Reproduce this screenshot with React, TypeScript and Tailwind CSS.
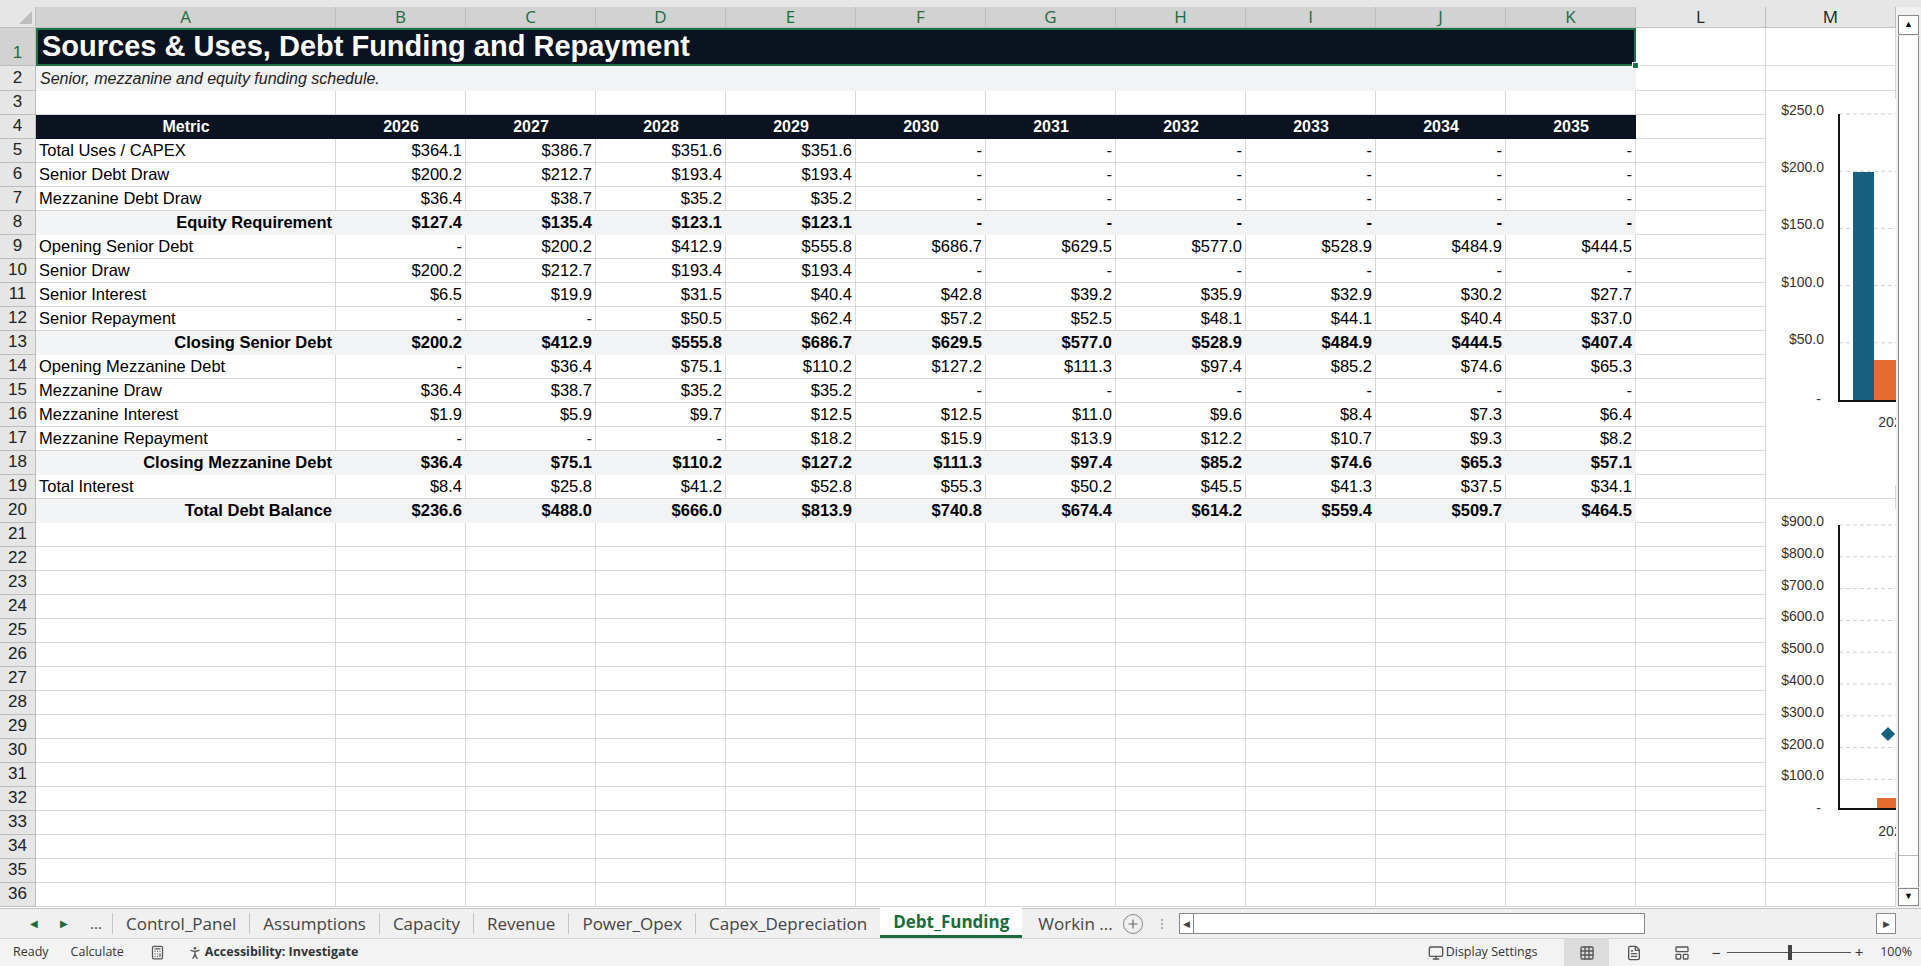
import { Plus, MoreVertical, Grid3x3, FileText, LayoutPanelTop, Calculator, Monitor, PersonStanding } from "lucide-react";

type Row = { n: number; label: string; vals: (number | null)[]; bold?: boolean };

const cols = ["B", "C", "D", "E", "F", "G", "H", "I", "J", "K"];
const years = [2026, 2027, 2028, 2029, 2030, 2031, 2032, 2033, 2034, 2035];
const _ = null;

const rows: Row[] = [
  { n: 5, label: "Total Uses / CAPEX", vals: [364.1, 386.7, 351.6, 351.6, _, _, _, _, _, _] },
  { n: 6, label: "Senior Debt Draw", vals: [200.2, 212.7, 193.4, 193.4, _, _, _, _, _, _] },
  { n: 7, label: "Mezzanine Debt Draw", vals: [36.4, 38.7, 35.2, 35.2, _, _, _, _, _, _] },
  { n: 8, label: "Equity Requirement", bold: true, vals: [127.4, 135.4, 123.1, 123.1, _, _, _, _, _, _] },
  { n: 9, label: "Opening Senior Debt", vals: [_, 200.2, 412.9, 555.8, 686.7, 629.5, 577.0, 528.9, 484.9, 444.5] },
  { n: 10, label: "Senior Draw", vals: [200.2, 212.7, 193.4, 193.4, _, _, _, _, _, _] },
  { n: 11, label: "Senior Interest", vals: [6.5, 19.9, 31.5, 40.4, 42.8, 39.2, 35.9, 32.9, 30.2, 27.7] },
  { n: 12, label: "Senior Repayment", vals: [_, _, 50.5, 62.4, 57.2, 52.5, 48.1, 44.1, 40.4, 37.0] },
  { n: 13, label: "Closing Senior Debt", bold: true, vals: [200.2, 412.9, 555.8, 686.7, 629.5, 577.0, 528.9, 484.9, 444.5, 407.4] },
  { n: 14, label: "Opening Mezzanine Debt", vals: [_, 36.4, 75.1, 110.2, 127.2, 111.3, 97.4, 85.2, 74.6, 65.3] },
  { n: 15, label: "Mezzanine Draw", vals: [36.4, 38.7, 35.2, 35.2, _, _, _, _, _, _] },
  { n: 16, label: "Mezzanine Interest", vals: [1.9, 5.9, 9.7, 12.5, 12.5, 11.0, 9.6, 8.4, 7.3, 6.4] },
  { n: 17, label: "Mezzanine Repayment", vals: [_, _, _, 18.2, 15.9, 13.9, 12.2, 10.7, 9.3, 8.2] },
  { n: 18, label: "Closing Mezzanine Debt", bold: true, vals: [36.4, 75.1, 110.2, 127.2, 111.3, 97.4, 85.2, 74.6, 65.3, 57.1] },
  { n: 19, label: "Total Interest", vals: [8.4, 25.8, 41.2, 52.8, 55.3, 50.2, 45.5, 41.3, 37.5, 34.1] },
  { n: 20, label: "Total Debt Balance", bold: true, vals: [236.6, 488.0, 666.0, 813.9, 740.8, 674.4, 614.2, 559.4, 509.7, 464.5] },
];

const fmt = (v: number | null) => (v === null ? "-" : "$" + v.toFixed(1));

const RowNum = ({ n, h = "h-[24px]", active }: { n: number; h?: string; active?: boolean }) => (
  <div
    className={`w-[36px] shrink-0 ${h} flex items-end justify-center pb-[0px] border-r border-b border-[#bdbdbd] text-[17px] ${
      active ? "bg-[#d2d2d2] text-[#1e6b3c]" : "bg-[#e6e6e6] text-[#222]"
    }`}
  >
    {n}
  </div>
);

const Empty = ({ cls = "" }: { cls?: string }) => (
  <div className={`w-[130px] shrink-0 border-r border-b border-[#d9d9d9] ${cls}`} />
);

function Chart() {
  const lbl = "fill-[#333] text-[14px]";
  const c2 = [900, 800, 700, 600, 500, 400, 300, 200, 100];
  return (
    <svg className="absolute left-[1766px] top-0" width={130} height={908} style={{ fontFamily: "Liberation Sans, Arial, sans-serif" }}>
      <rect x={0} y={92} width={130} height={386} fill="#fff" />
      {[250, 200, 150, 100, 50].map((v, i) => {
        const y = 107 + i * 57.2;
        return (
          <g key={v}>
            <line x1={73} x2={130} y1={y} y2={y} stroke="#cfcfcf" strokeDasharray="4 3" />
            <text x={58} y={y + 1} textAnchor="end" className={lbl}>${v}.0</text>
          </g>
        );
      })}
      <text x={55} y={397} textAnchor="end" className={lbl}>-</text>
      <rect x={87} y={165} width={21} height={228} fill="#17607f" />
      <rect x={108} y={353} width={22} height={40} fill="#e46c2f" />
      <line x1={73} x2={73} y1={107} y2={394} stroke="#111" strokeWidth={2} />
      <line x1={72} x2={130} y1={394} y2={394} stroke="#111" strokeWidth={2} />
      <text x={124} y={420} textAnchor="middle" className={lbl}>202</text>

      <rect x={0} y={502} width={130} height={343} fill="#fff" />
      {c2.map((v, i) => {
        const y = 518 + i * 31.8;
        return (
          <g key={v}>
            <line x1={73} x2={130} y1={y} y2={y} stroke="#cfcfcf" strokeDasharray="4 3" />
            <text x={58} y={y + 1} textAnchor="end" className={lbl}>${v}.0</text>
          </g>
        );
      })}
      <text x={55} y={806} textAnchor="end" className={lbl}>-</text>
      <rect x={111} y={791} width={19} height={11} fill="#e46c2f" />
      <rect x={117} y={722} width={10} height={10} fill="#17607f" transform="rotate(45 122 727)" />
      <line x1={73} x2={73} y1={518} y2={803} stroke="#111" strokeWidth={2} />
      <line x1={72} x2={130} y1={802} y2={802} stroke="#111" strokeWidth={2} />
      <text x={124} y={829} textAnchor="middle" className={lbl}>202</text>
    </svg>
  );
}

export default function App() {
  const font = { fontFamily: "Liberation Sans, Arial, sans-serif" };
  const ui = { fontFamily: "'Open Sans', 'Noto Sans', sans-serif" };
  const empties = Array.from({ length: 16 }, (_, i) => 21 + i);

  return (
    <div className="w-[1921px] h-[966px] overflow-hidden bg-white flex flex-col text-black" style={font}>
      <div className="h-[7px] bg-[#e6e6e6]" />
      <div className="flex flex-1 min-h-0">
        <div className="relative flex-1 flex flex-col overflow-hidden">
          {/* column headers */}
          <div className="flex h-[21px] text-[17px]" style={ui}>
            <div className="w-[36px] shrink-0 bg-[#e6e6e6] border-r border-b border-[#bdbdbd] relative">
              <div className="absolute right-[3px] bottom-[3px] w-0 h-0 border-l-[13px] border-l-transparent border-b-[13px] border-b-[#bdbdbd]" />
            </div>
            <div className="w-[300px] shrink-0 bg-[#d2d2d2] text-[#1e6b3c] border-r border-b border-[#bdbdbd] flex items-center justify-center">A</div>
            {cols.map((c) => (
              <div key={c} className="w-[130px] shrink-0 bg-[#d2d2d2] text-[#1e6b3c] border-r border-b border-[#bdbdbd] flex items-center justify-center">{c}</div>
            ))}
            {["L", "M"].map((c) => (
              <div key={c} className="w-[130px] shrink-0 bg-[#e6e6e6] text-[#222] border-r border-b border-[#bdbdbd] flex items-center justify-center">{c}</div>
            ))}
          </div>
          {/* row 1 */}
          <div className="flex h-[38px]">
            <RowNum n={1} h="h-[38px]" active />
            <div className="w-[1600px] shrink-0 bg-[#0b1220] border-2 border-[#1e7145] relative flex items-center px-[4px] text-white font-bold text-[29px]">
              Sources &amp; Uses, Debt Funding and Repayment
              <div className="absolute -right-[5px] -bottom-[5px] w-[7px] h-[7px] bg-[#1e7145] border border-white" />
            </div>
            <Empty /><Empty />
          </div>
          {/* row 2 */}
          <div className="flex h-[25px]">
            <RowNum n={2} h="h-[25px]" />
            <div className="w-[1600px] shrink-0 bg-[#f2f3f5] flex items-center px-[4px] italic text-[16px] text-[#222]">
              Senior, mezzanine and equity funding schedule.
            </div>
            <Empty /><Empty />
          </div>
          {/* row 3 */}
          <div className="flex h-[24px]">
            <RowNum n={3} />
            <div className="w-[300px] shrink-0 border-r border-b border-[#d9d9d9]" />
            {cols.map((c) => <Empty key={c} />)}
            <Empty /><Empty />
          </div>
          {/* row 4 header */}
          <div className="flex h-[24px]">
            <RowNum n={4} />
            <div className="w-[300px] shrink-0 bg-[#0b1220] text-white font-bold text-[16px] flex items-center justify-center">Metric</div>
            {years.map((y) => (
              <div key={y} className="w-[130px] shrink-0 bg-[#0b1220] text-white font-bold text-[16px] flex items-center justify-center">{y}</div>
            ))}
            <Empty /><Empty />
          </div>
          {rows.map((r) => (
            <div key={r.n} className="flex h-[24px] text-[16.5px]">
              <RowNum n={r.n} />
              <div
                className={`w-[300px] shrink-0 flex items-center px-[3px] border-r border-b ${
                  r.bold ? "bg-[#f2f3f5] font-bold justify-end border-[#f2f3f5]" : "border-[#d9d9d9]"
                }`}
              >
                {r.label}
              </div>
              {r.vals.map((v, i) => (
                <div
                  key={i}
                  className={`w-[130px] shrink-0 flex items-center justify-end px-[3px] border-r border-b ${
                    r.bold ? "bg-[#f2f3f5] font-bold border-[#f2f3f5]" : "border-[#d9d9d9]"
                  }`}
                >
                  {fmt(v)}
                </div>
              ))}
              <Empty /><Empty />
            </div>
          ))}
          {empties.map((n) => (
            <div key={n} className="flex h-[24px]">
              <RowNum n={n} />
              <div className="w-[300px] shrink-0 border-r border-b border-[#d9d9d9]" />
              {cols.map((c) => <Empty key={c} />)}
              <Empty /><Empty />
            </div>
          ))}
          <Chart />
        </div>
        {/* vertical scrollbar */}
        <div className="w-[25px] shrink-0 bg-[#f0f0f0] flex flex-col items-center pt-[8px] pb-[2px]">
          <div className="w-[21px] h-[20px] border border-[#888] bg-white flex items-center justify-center text-[9px]">▲</div>
          <div className="w-[21px] flex-1 bg-white border-x border-[#888] my-[1px]">
            <div className="h-[820px] border-b border-[#bbb]" />
          </div>
          <div className="w-[21px] h-[18px] border border-[#888] bg-white flex items-center justify-center text-[9px]">▼</div>
        </div>
      </div>
      {/* tab bar */}
      <div className="h-[30px] shrink-0 bg-[#f0f0f0] border-t border-[#c6c6c6] flex items-stretch text-[17px] text-[#444]" style={ui}>
        <div className="flex items-center gap-[22px] pl-[30px] w-[112px] text-[#1e6b3c] text-[10px]">
          <span>◀</span>
          <span>▶</span>
          <span className="text-[#444] text-[15px]">...</span>
        </div>
        {["Control_Panel", "Assumptions", "Capacity", "Revenue", "Power_Opex", "Capex_Depreciation"].map((t) => (
          <div key={t} className="flex items-center px-[13px] border-l border-[#c6c6c6] my-[4px]">{t}</div>
        ))}
        <div className="flex items-center px-[13px] bg-white text-[#1e6b3c] font-bold border-b-[3px] border-[#1e6b3c] -mt-[1px]">Debt_Funding</div>
        <div className="flex items-center pl-[16px] pr-[10px]">Workin ...</div>
        <div className="flex items-center gap-[12px]">
          <div className="w-[20px] h-[20px] rounded-full border border-[#888] flex items-center justify-center">
            <Plus size={14} className="text-[#666]" />
          </div>
          <MoreVertical size={14} className="text-[#aaa]" />
        </div>
        <div className="ml-[10px] my-[4px] w-[466px] border border-[#888] bg-white flex items-center">
          <span className="text-[9px] px-[3px]">◀</span>
          <div className="h-full border-l border-[#888]" />
        </div>
        <div className="ml-auto mr-[25px] my-[4px] w-[20px] border border-[#888] bg-white flex items-center justify-center text-[9px]">▶</div>
      </div>
      {/* status bar */}
      <div className="h-[28px] shrink-0 bg-[#f3f3f3] border-t border-[#d6d6d6] flex items-center text-[12.5px] text-[#333]" style={ui}>
        <span className="ml-[13px]">Ready</span>
        <span className="ml-[22px]">Calculate</span>
        <Calculator size={15} className="ml-[26px] text-[#555]" />
        <PersonStanding size={16} className="ml-[22px] text-[#555]" />
        <span className="ml-[2px] font-bold">Accessibility: Investigate</span>
        <div className="ml-auto flex items-center h-full">
          <Monitor size={16} className="text-[#555]" />
          <span className="ml-[2px]">Display Settings</span>
          <div className="ml-[27px] w-[45px] h-full bg-[#dcdcdc] flex items-center justify-center">
            <Grid3x3 size={16} className="text-[#555]" />
          </div>
          <FileText size={16} className="ml-[17px] text-[#555]" />
          <LayoutPanelTop size={16} className="ml-[32px] text-[#555]" />
          <span className="ml-[21px] text-[16px]">−</span>
          <div className="ml-[6px] w-[124px] h-[1px] bg-[#555] relative">
            <div className="absolute left-[61px] -top-[7px] w-[4px] h-[15px] bg-[#444]" />
          </div>
          <span className="ml-[4px] text-[15px]">+</span>
          <span className="ml-[17px] mr-[9px]">100%</span>
        </div>
      </div>
    </div>
  );
}
